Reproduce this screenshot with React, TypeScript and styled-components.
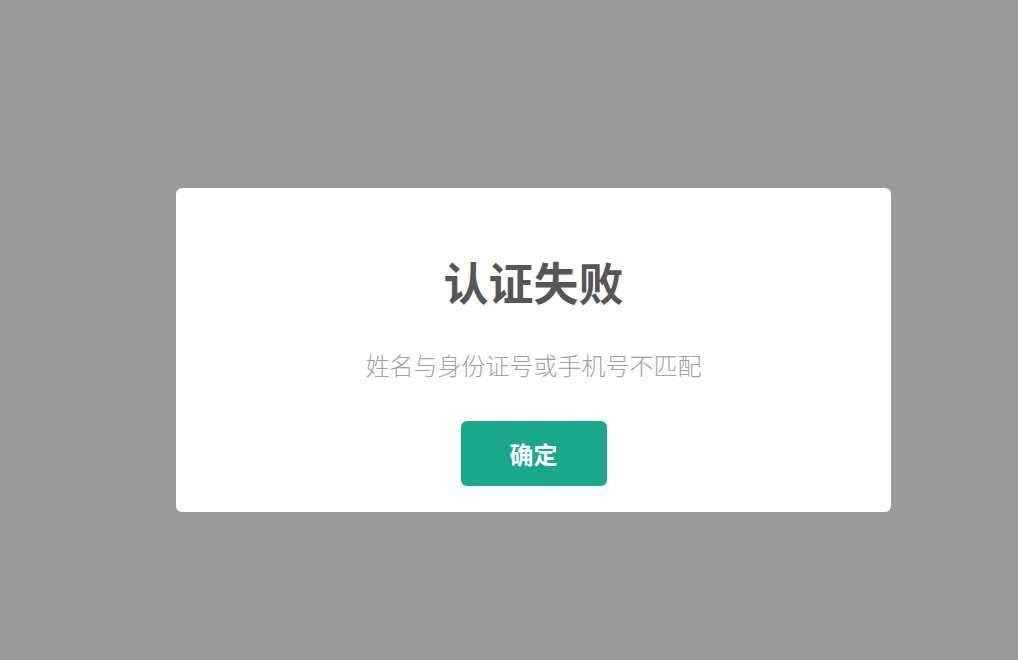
import React from "react";
import styled, { createGlobalStyle } from "styled-components";

const GlobalStyle = createGlobalStyle`
  html, body {
    margin: 0;
    padding: 0;
    height: 100%;
    overflow: hidden;
  }
  body {
    font-family: "Noto Sans CJK SC", "Noto Sans", sans-serif;
    background: #999999;
  }
  #root {
    height: 100%;
  }
`;

const Overlay = styled.div`
  width: 100%;
  height: 100vh;
  background: #999999;
  display: flex;
  justify-content: flex-start;
  align-items: flex-start;
  padding: 188px 0 0 176px;
  box-sizing: border-box;
`;

const Dialog = styled.div`
  width: 715px;
  flex-shrink: 0;
  box-sizing: border-box;
  background: #ffffff;
  border-radius: 6px;
  padding: 64px 0 26px;
  display: flex;
  flex-direction: column;
  align-items: center;
`;

const Title = styled.h2`
  margin: 0;
  font-size: 45px;
  line-height: 60px;
  font-weight: 700;
  color: #565656;
`;

const Message = styled.p`
  margin: 36px 0 0;
  font-size: 24px;
  line-height: 34px;
  font-weight: 300;
  color: #a2a2a2;
`;

const ConfirmButton = styled.button`
  margin-top: 39px;
  width: 146px;
  height: 65px;
  border: none;
  border-radius: 6px;
  background: #1aa88a;
  color: #ffffff;
  font-family: inherit;
  font-size: 24px;
  font-weight: 700;
  cursor: pointer;
`;

export default function App() {
  return (
    <>
      <GlobalStyle />
      <Overlay>
        <Dialog>
          <Title>认证失败</Title>
          <Message>姓名与身份证号或手机号不匹配</Message>
          <ConfirmButton>确定</ConfirmButton>
        </Dialog>
      </Overlay>
    </>
  );
}
